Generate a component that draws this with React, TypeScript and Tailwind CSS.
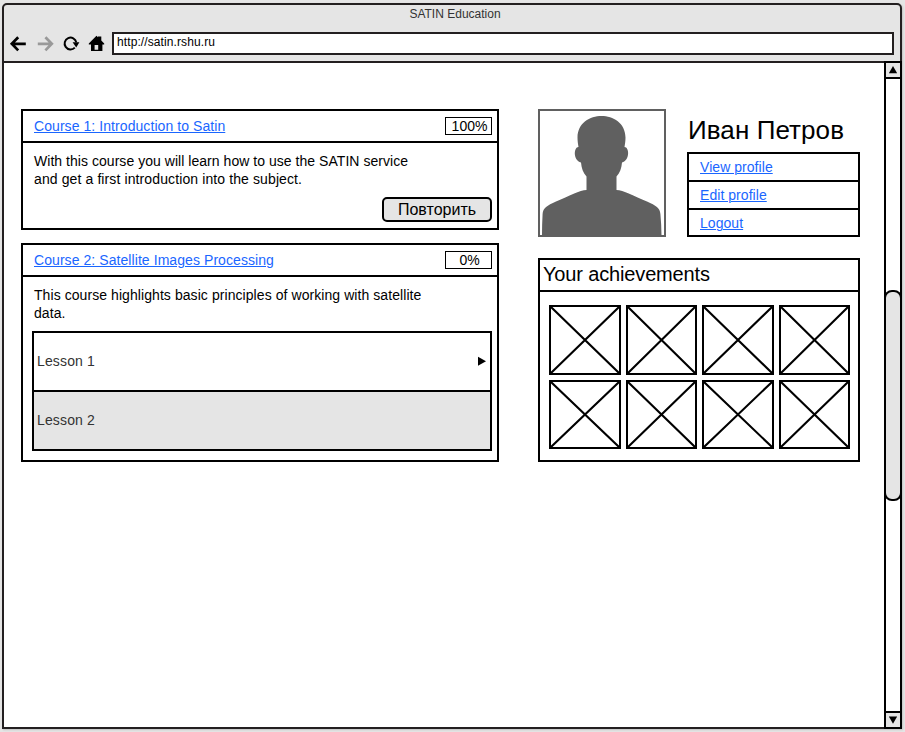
import type { ReactNode } from "react";

function Browser({ children }: { children: ReactNode }) {
  return (
    <div className="flex h-[732px] w-[905px] overflow-hidden bg-[#e5e5e5] pt-[3px] pl-[2px] font-['Liberation_Sans',Arial,sans-serif] text-black">
      <div className="flex h-[726px] w-[900px] flex-col rounded-t-[5px] border-2 border-[#231f20] bg-[#e5e5e5] shadow-[1px_1px_2px_rgba(0,0,0,0.15)]">
        <div className="flex h-[27px] shrink-0 justify-center pt-px pl-[6px] text-[12px] leading-[16px] text-[#333]">
          <span>SATIN Education</span>
        </div>
        <div className="flex h-[29px] shrink-0 items-start">
          <NavIcons />
          <div className="h-[23px] w-[782px] border-2 border-[#231f20] bg-white pl-[3px] text-[12px] leading-[16px] tracking-[0.1px]">
            http://satin.rshu.ru
          </div>
        </div>
        <div className="flex h-[666px] shrink-0 border-t-2 border-[#231f20] bg-white">
          <main className="flex w-[880px] shrink-0 items-start gap-[39px] pt-[46px] pl-[17px]">{children}</main>
          <ScrollBar />
        </div>
      </div>
    </div>
  );
}

function NavIcons() {
  return (
    <svg className="h-[23px] w-[108px] shrink-0" viewBox="4 32 108 23" fill="none">
      <path d="M25.800 43.8H12.2M18.2 37.200L11.8 43.8L18.2 50.400" stroke="#000" strokeWidth="2.7" />
      <path d="M37.800 43.8H51.4M45.4 37.200L51.8 43.8L45.4 50.400" stroke="#999" strokeWidth="2.7" />
      <path d="M74.8 47.600A5.9 5.9 0 1 1 76.3 42.4" stroke="#000" strokeWidth="2" />
      <path d="M72.6 42.2L79.400 42.2L76.200 47.6Z" fill="#000" />
      <path
        d="M88.8 43.4L96.5 35.800L98 37.300V36.4H101.3V40.600L104.2 43.4V44.4H102.400V51H91V44.4H88.8ZM94.6 45V49.8H98.200V45Z"
        fill="#000"
        fillRule="evenodd"
      />
    </svg>
  );
}

function ScrollBar() {
  return (
    <div className="-mt-[2px] -mb-[2px] flex w-[18px] shrink-0 flex-col border-2 border-black bg-white">
      <div className="flex h-[16px] shrink-0 items-center justify-center border-b-2 border-black bg-[#e5e5e5]">
        <svg className="h-[8px] w-[8px]" viewBox="0 0 8 8">
          <path d="M4 0L8.200 7.3H-.2Z" />
        </svg>
      </div>
      <div className="-mx-[2px] mt-[211px] h-[211px] shrink-0 rounded-[8px] border-2 border-black bg-[#e5e5e5]" />
      <div className="mt-auto flex h-[16px] shrink-0 items-center justify-center border-t-2 border-black bg-[#e5e5e5]">
        <svg className="h-[8px] w-[8px]" viewBox="0 0 8 8">
          <path d="M-.2 .5H8.200L4 7.8Z" />
        </svg>
      </div>
    </div>
  );
}

function Link({ children }: { children: ReactNode }) {
  return (
    <a href="#" className="text-[#1a66ff] underline decoration-1 underline-offset-1">
      {children}
    </a>
  );
}

function CourseHeader({ title, progress }: { title: string; progress: string }) {
  return (
    <div className="flex h-[32px] shrink-0 items-start justify-between border-b-2 border-black pr-[5px] pl-[11px] text-[14px]">
      <div className="pt-[6px] leading-[18px] tracking-[0.07px]">
        <Link>{title}</Link>
      </div>
      <div className="mt-[6px] flex h-[18px] w-[47px] items-center justify-center border border-black pl-[2px] leading-[16px]">
        {progress}
      </div>
    </div>
  );
}

function Avatar() {
  return (
    <div className="h-[128px] w-[128px] border-2 border-[#606060]">
      <svg className="h-[124px] w-[124px]" viewBox="540 111 124 124">
        <path
          fill="#606060"
          d="M601.5 116C590 116 577.5 123 577.5 137.500C577.5 141 578 144 578.5 147C573.500 147 573 160.500 581 162.500C581.500 168 583 173 586.500 176.500V190C580 190 569 196 556 201.500C547 205.500 543 208 542.600 214C542.200 221 542 228 542 235H661.500C661.500 228 661 221 660.400 214C660 208 656 205.500 647 201.500C634 196 623 190 616.500 190V176.500C620 173 621.500 168 622 162.500C630 160.500 629.500 147 624.500 147C625 144 625.500 141 625.500 137.500C625.500 123 613 116 601.500 116Z"
        />
      </svg>
    </div>
  );
}

function Placeholder() {
  return (
    <div className="border-2 border-black">
      <svg className="h-full w-full" viewBox="0 0 68 66" preserveAspectRatio="none">
        <path d="M0 0L68 66M68 0L0 66" stroke="#000" strokeWidth="2.1" />
      </svg>
    </div>
  );
}

export default function App() {
  return (
    <Browser>
      <section className="flex w-[478px] flex-col gap-[13px]">
        <article className="flex h-[121px] flex-col border-2 border-black">
          <CourseHeader title="Course 1: Introduction to Satin" progress="100%" />
          <p className="pt-[9px] pl-[11px] text-[14px] leading-[18px] whitespace-nowrap">
            <span className="tracking-[0.04px]">With this course you will learn how to use the SATIN service</span>
            <br />
            <span className="tracking-[0.11px]">and get a first introduction into the subject.</span>
          </p>
          <button className="mt-[9px] mr-[5px] flex h-[25px] w-[110px] items-center justify-center self-end rounded-[5px] border-2 border-black bg-[#e5e5e5] text-[16px] leading-[20px]">
            Повторить
          </button>
        </article>
        <article className="flex h-[219px] flex-col border-2 border-black">
          <CourseHeader title="Course 2: Satellite Images Processing" progress="0%" />
          <p className="pt-[9px] pl-[11px] text-[14px] leading-[18px] tracking-[0.07px] whitespace-nowrap">
            This course highlights basic principles of working with satellite
            <br />
            data.
          </p>
          <ul className="mt-[9px] ml-[9px] flex h-[120px] w-[460px] flex-col border-2 border-black text-[14px] tracking-[0.14px] text-[#333]">
            <li className="flex h-[59px] items-center justify-between border-b-2 border-black pr-[4px] pb-px pl-[3px]">
              <span className="pt-px">Lesson 1</span>
              <svg className="h-[10px] w-[8px]" viewBox="0 0 8 10">
                <path d="M0 .7L8 5.200L0 9.700Z" fill="#000" />
              </svg>
            </li>
            <li className="flex h-[57px] items-center bg-[#e5e5e5] pl-[3px]">Lesson 2</li>
          </ul>
        </article>
      </section>

      <aside className="flex w-[322px] flex-col gap-[21px]">
        <div className="flex justify-between">
          <Avatar />
          <div className="flex w-[173px] flex-col">
            <h1 className="h-[43px] pt-[6px] pl-px text-[26px] leading-[30px] tracking-[0.08px] whitespace-nowrap">Иван Петров</h1>
            <nav className="flex h-[85px] flex-col divide-y-2 divide-black border-2 border-black text-[14px] leading-[26px] tracking-[0.05px]">
              <div className="h-[28px] pl-[11px]"><Link>View profile</Link></div>
              <div className="h-[28px] pl-[11px]"><Link>Edit profile</Link></div>
              <div className="h-[25px] pl-[11px]"><Link>Logout</Link></div>
            </nav>
          </div>
        </div>
        <div className="h-[204px] border-2 border-black">
          <h2 className="h-[32px] border-b-2 border-black pl-[3px] text-[20px] leading-[28px] tracking-[-0.15px]">Your achievements</h2>
          <div className="grid grid-cols-[72px_71px_72px_71px] grid-rows-[70px_69px] gap-[5px] pt-[13px] pl-[9px]">
            {Array.from({ length: 8 }, (_, i) => (
              <Placeholder key={i} />
            ))}
          </div>
        </div>
      </aside>
    </Browser>
  );
}
